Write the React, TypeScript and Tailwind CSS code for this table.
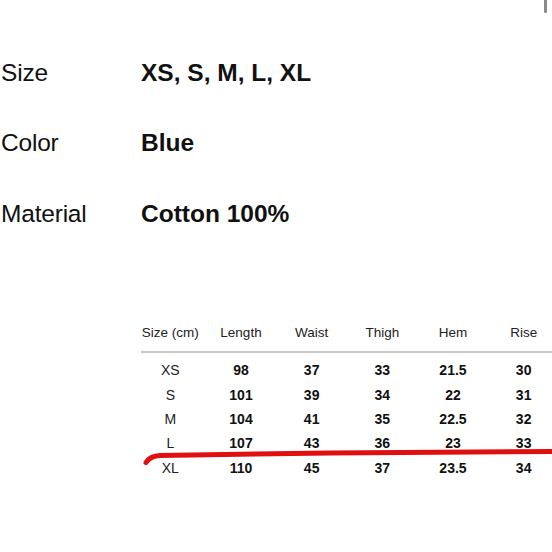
import React from "react";

const rows = [
  ["XS", "98", "37", "33", "21.5", "30"],
  ["S", "101", "39", "34", "22", "31"],
  ["M", "104", "41", "35", "22.5", "32"],
  ["L", "107", "43", "36", "23", "33"],
  ["XL", "110", "45", "37", "23.5", "34"],
];
const heads = ["Size (cm)", "Length", "Waist", "Thigh", "Hem", "Rise"];

export default function App() {
  return (
    <div
      className="relative w-[552px] h-[552px] overflow-hidden bg-white text-[#111]"
      style={{ fontFamily: '"Liberation Sans", Arial, sans-serif' }}
    >
      <div className="absolute left-[544px] top-0 w-[3px] h-[13px] rounded-b-full bg-[#8a8a8a]" />
      <div className="pt-[38px] pl-[1px] flex flex-col">
        {[
          ["Size", "XS, S, M, L, XL"],
          ["Color", "Blue"],
          ["Material", "Cotton 100%"],
        ].map(([k, v]) => (
          <div key={k} className="flex items-center h-[70.5px] text-[24.5px]">
            <div className="w-[140px] tracking-[-0.2px]">{k}</div>
            <div className="font-bold tracking-[0px]">{v}</div>
          </div>
        ))}
      </div>
      <div className="absolute left-[135px] top-[319px] w-[424px]">
        <div className="grid grid-cols-6 h-[28px] items-center text-[13.5px] text-[#222]">
          {heads.map((h) => (
            <div key={h} className="text-center">{h}</div>
          ))}
        </div>
        <div className="ml-[6px] mt-[4px] h-[1.5px] bg-[#c8c8c8]" />
        <div className="mt-[6px] flex flex-col">
          {rows.map((r) => (
            <div key={r[0]} className="grid grid-cols-6 h-[24.4px] items-center text-[14px]">
              {r.map((c, i) => (
                <div key={i} className={"text-center " + (i === 0 ? "font-normal text-[#222]" : "font-bold")}>
                  {c}
                </div>
              ))}
            </div>
          ))}
        </div>
      </div>
      <svg className="absolute left-0 top-0" width="552" height="552" viewBox="0 0 552 552">
        <path
          d="M146 462.5 Q150 456 160 455.5 L 330 453 L 555 451.5"
          fill="none"
          stroke="#e01010"
          strokeWidth="5"
          strokeLinecap="round"
        />
      </svg>
    </div>
  );
}
